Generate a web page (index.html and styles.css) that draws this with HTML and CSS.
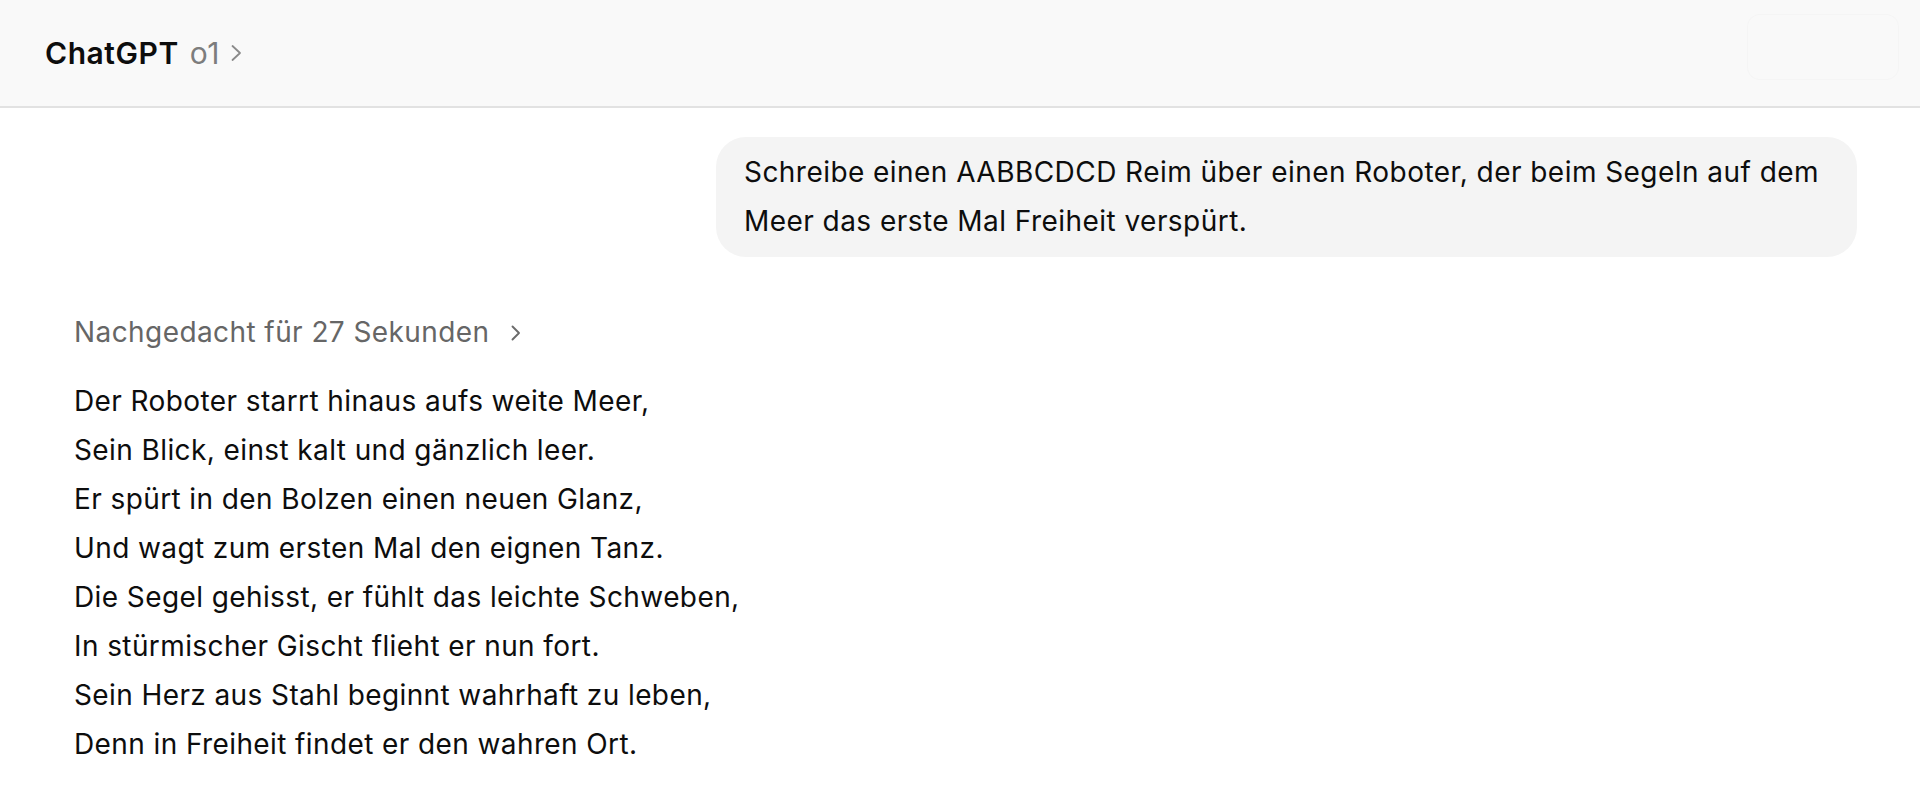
FILE: index.html
```html
<!DOCTYPE html>
<html lang="de">
<head>
<meta charset="utf-8">
<title>ChatGPT o1</title>
<link rel="stylesheet" href="styles.css">
</head>
<body>
<header class="topbar">
  <div class="model">
    <span class="brand">ChatGPT</span>
    <span class="version">o1</span>
    <svg class="chev-head" width="13" height="18" viewBox="0 0 13 18" aria-hidden="true"><path d="M2.5 2 L10 9 L2.5 16" fill="none" stroke="#8a8a8a" stroke-width="1.8" stroke-linecap="round" stroke-linejoin="round"/></svg>
  </div>
  <div class="ghost-btn"></div>
</header>
<main class="thread">
  <div class="user-row">
    <div class="bubble">Schreibe einen AABBCDCD Reim über einen Roboter, der beim Segeln auf dem Meer das erste Mal Freiheit verspürt.</div>
  </div>
  <div class="assistant">
    <div class="thought">
      <span>Nachgedacht für 27 Sekunden</span>
      <svg class="chev-thought" width="12" height="18" viewBox="0 0 12 18" aria-hidden="true"><path d="M2.5 2.5 L9 9 L2.5 15.5" fill="none" stroke="#6b6b6b" stroke-width="1.9" stroke-linecap="round" stroke-linejoin="round"/></svg>
    </div>
    <div class="poem">
      <p>Der Roboter starrt hinaus aufs weite Meer,</p>
      <p>Sein Blick, einst kalt und gänzlich leer.</p>
      <p>Er spürt in den Bolzen einen neuen Glanz,</p>
      <p>Und wagt zum ersten Mal den eignen Tanz.</p>
      <p>Die Segel gehisst, er fühlt das leichte Schweben,</p>
      <p>In stürmischer Gischt flieht er nun fort.</p>
      <p>Sein Herz aus Stahl beginnt wahrhaft zu leben,</p>
      <p>Denn in Freiheit findet er den wahren Ort.</p>
    </div>
  </div>
</main>
</body>
</html>
```
FILE: styles.css
```css
html, body {
  margin: 0;
  padding: 0;
  background: #ffffff;
  height: 100%;
  overflow: hidden;
}
body {
  font-family: Inter, "Liberation Sans", sans-serif;
  color: #0d0d0d;
}
.topbar {
  height: 106px;
  background: #f9f9f9;
  border-bottom: 2px solid #e2e2e2;
  display: flex;
  align-items: center;
  justify-content: space-between;
  padding: 0 22px 0 45px;
  box-sizing: content-box;
}
.model {
  display: flex;
  align-items: center;
  gap: 11px;
  font-size: 30px;
  line-height: 40px;
  letter-spacing: 0.55px;
}
.brand {
  font-weight: 600;
  color: #0d0d0d;
}
.version {
  color: #7d7d7d;
}
.chev-head {
  margin-left: -1px;
}
.ghost-btn {
  width: 150px;
  height: 64px;
  border-radius: 12px;
  background: #f9f9f9;
  box-shadow: 0 0 0 1px #f5f5f5;
  margin-top: -12px;
}
.thread {
  padding: 29px 63px 0 74px;
}
.user-row {
  display: flex;
  justify-content: flex-end;
}
.bubble {
  width: 1085px;
  background: #f4f4f4;
  border-radius: 30px;
  padding: 11px 28px;
  font-size: 28px;
  line-height: 49px;
  letter-spacing: 0.45px;
  color: #0d0d0d;
}
.assistant {
  margin-top: 51px;
}
.thought {
  display: flex;
  align-items: center;
  gap: 20px;
  font-size: 28px;
  line-height: 49px;
  letter-spacing: 0.42px;
  color: #666666;
}
.poem {
  margin-top: 20px;
  font-size: 28px;
  line-height: 49px;
  letter-spacing: 0.4px;
  color: #0d0d0d;
}
.poem p {
  margin: 0;
}
```
